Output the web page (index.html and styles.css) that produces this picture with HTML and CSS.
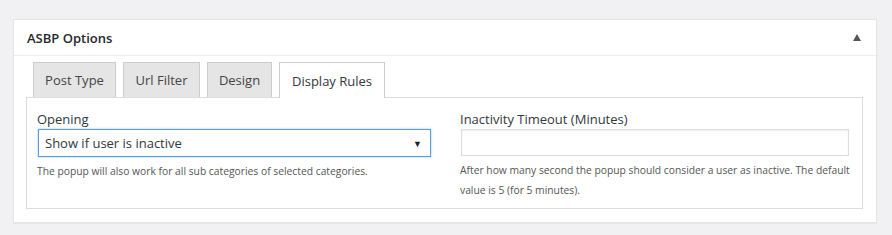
FILE: index.html
```html
<!DOCTYPE html>
<html lang="en">
<head>
  <meta charset="UTF-8" />
  <title>ASBP Options</title>
  <link rel="stylesheet" href="styles.css">
</head>
<body>
  <div class="wrap">
    <div class="postbox">
      <div class="postbox-header">
        <h2>ASBP Options</h2>
        <span class="toggle"></span>
      </div>
      <div class="inside">
        <div class="tabs">
          <div class="tab tab-post">Post Type</div>
          <div class="tab tab-url">Url Filter</div>
          <div class="tab tab-design">Design</div>
          <div class="tab tab-rules active">Display Rules</div>
        </div>
        <div class="panel">
          <div class="field field-left">
            <label class="label">Opening</label>
            <div class="select">
              <span>Show if user is inactive</span>
              <span class="arrow">▼</span>
            </div>
            <p class="help">The popup will also work for all sub categories of selected categories.</p>
          </div>
          <div class="field field-right">
            <label class="label">Inactivity Timeout (Minutes)</label>
            <div class="input"></div>
            <p class="help">After how many second the popup should consider a user as inactive. The default value is 5 (for 5 minutes).</p>
          </div>
        </div>
      </div>
    </div>
  </div>
</body>
</html>
```

FILE: styles.css
```css
body {
  margin: 0;
  background: #f1f0f3;
  font-family: 'Open Sans', 'Noto Sans', sans-serif;
  color: #23282d;
}
.wrap {
  padding: 19px 0 0 13px;
  height: 216px;
}
.postbox {
  width: 862px;
  height: 202px;
  background: #fff;
  border: 1px solid #e5e5e5;
  box-shadow: 0 1px 1px rgba(0, 0, 0, 0.04);
}
.postbox-header {
  height: 35px;
  border-bottom: 1px solid #eee;
  display: flex;
  align-items: center;
  justify-content: space-between;
  padding: 0 13px;
}
.postbox-header h2 {
  margin: 0;
  font-size: 13px;
  font-weight: 600;
  color: #23282d;
}
.toggle {
  width: 0;
  height: 0;
  border-left: 4px solid transparent;
  border-right: 4px solid transparent;
  border-bottom: 7px solid #555;
  margin-right: 2px;
}
.inside {
  padding: 6px 12px 0 12px;
}
.tabs {
  display: flex;
  gap: 7px;
  padding-left: 7px;
  height: 35px;
}
.tab {
  box-sizing: border-box;
  height: 35px;
  background: #e5e5e5;
  border: 1px solid #ccc;
  border-bottom: none;
  font-size: 13px;
  color: #444;
  display: flex;
  align-items: center;
  justify-content: center;
}
.tab-post { width: 83px; }
.tab-url { width: 77px; }
.tab-design { width: 65px; }
.tab-rules { width: 106px; }
.tab.active {
  background: #fff;
  height: 36px;
  margin-bottom: -1px;
  position: relative;
  color: #32373c;
}
.panel {
  box-sizing: border-box;
  width: 837px;
  height: 112px;
  border: 1px solid #ddd;
  display: flex;
  padding: 12px 0 0 10px;
}
.field-left {
  width: 395px;
  margin-right: 28px;
}
.field-right {
  width: 390px;
}
.label {
  display: block;
  font-size: 13px;
  color: #32373c;
  line-height: 18px;
  margin-bottom: 1px;
}
.select {
  box-sizing: border-box;
  margin-left: 1px;
  width: 393px;
  height: 28px;
  border: 1px solid #5b9dd9;
  box-shadow: 0 0 2px rgba(30, 140, 190, 0.5);
  display: flex;
  align-items: center;
  justify-content: space-between;
  padding: 0 8px 0 6px;
  font-size: 13px;
  color: #32373c;
}
.arrow {
  font-size: 9px;
  color: #222;
}
.input {
  box-sizing: border-box;
  margin-left: 1px;
  width: 388px;
  height: 27px;
  border: 1px solid #ddd;
  box-shadow: inset 0 1px 2px rgba(0, 0, 0, 0.07);
}
.help {
  margin: 4px 0 0 0;
  font-size: 10.3px;
  line-height: 20px;
  color: #555;
}
```
